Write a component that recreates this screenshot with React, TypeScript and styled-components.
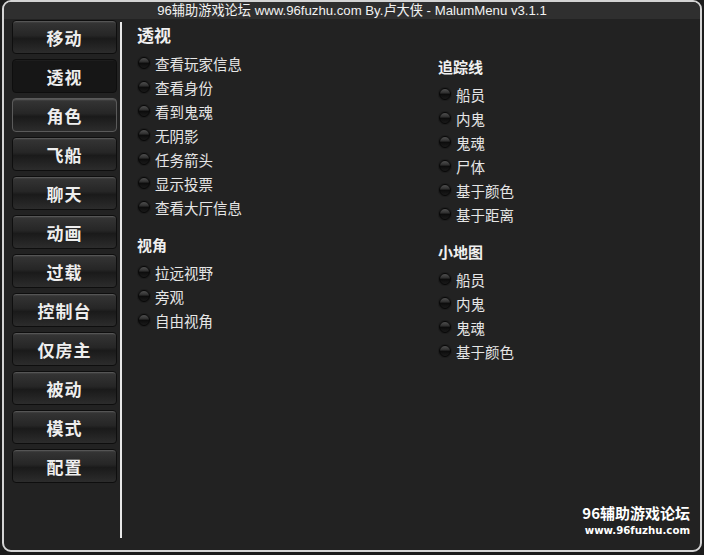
import React from 'react'
import styled, { createGlobalStyle } from 'styled-components'

const GlobalStyle = createGlobalStyle`
  html, body {
    margin: 0;
    padding: 0;
    background: #1b1b1b;
  }
  body {
    font-family: 'Liberation Sans', 'Noto Sans CJK SC', sans-serif;
  }
`

const Window = styled.div`
  box-sizing: border-box;
  width: 700px;
  height: 552px;
  margin: 0 2px 0 2px;
  border: 2px solid #d4d4d4;
  border-radius: 9px;
  background: #222222;
  overflow: hidden;
  display: flex;
  flex-direction: column;
`

const TitleBar = styled.div`
  height: 17px;
  line-height: 17px;
  background: #2f2f2f;
  color: #f2f2f2;
  font-size: 13.2px;
  text-align: center;
`

const Body = styled.div`
  flex: 1;
  display: flex;
  padding: 1px 0 0 8px;
  position: relative;
`

const Sidebar = styled.div`
  width: 105px;
  display: flex;
  flex-direction: column;
  gap: 5px;
`

const NavButton = styled.div<{ $active?: boolean; $hover?: boolean }>`
  box-sizing: border-box;
  height: 34px;
  border-radius: 4px;
  border: 1px solid ${(p) => (p.$hover ? '#5a5a5a' : '#0e0e0e')};
  background: ${(p) =>
    p.$active
      ? '#161616'
      : 'linear-gradient(to bottom, #4a4a4a 0%, #333 8%, #262626 45%, #1a1a1a 55%, #2c2c2c 100%)'};
  box-shadow: ${(p) => (p.$active ? 'inset 0 1px 0 #1d1d1d' : 'inset 0 1px 0 #555')};
  color: #eeeeee;
  font-family: 'Noto Sans CJK SC', sans-serif;
  font-weight: 700;
  font-size: 17px;
  display: flex;
  align-items: center;
  justify-content: center;
  letter-spacing: 1px;
`

const Divider = styled.div`
  width: 2px;
  background: #e8e8e8;
  margin: 2px 0 12px 3px;
`

const Content = styled.div`
  flex: 1;
  display: grid;
  grid-template-columns: 301px 1fr;
  padding: 4px 0 0 15px;
`

const Column = styled.div<{ $top: number }>`
  display: flex;
  flex-direction: column;
  padding-top: ${(p) => p.$top}px;
`

const Heading = styled.div<{ $size?: number; $gap?: number; $below?: number }>`
  color: #f0f0f0;
  font-family: 'Noto Sans CJK SC', sans-serif;
  font-weight: 700;
  font-size: ${(p) => p.$size ?? 15}px;
  line-height: 22px;
  height: 22px;
  margin-top: ${(p) => p.$gap ?? 0}px;
  margin-bottom: ${(p) => p.$below ?? 4}px;
`

const Option = styled.div`
  display: flex;
  align-items: center;
  gap: 5px;
  height: 24px;
  color: #e6e6e6;
  font-family: 'Noto Sans CJK SC', sans-serif;
  font-size: 14.5px;
  padding-left: 1px;
`

const Check = styled.span`
  box-sizing: border-box;
  width: 12px;
  height: 12px;
  border-radius: 6px;
  border: 1px solid #080808;
  background: linear-gradient(to bottom, #505050 0%, #2e2e2e 40%, #0c0c0c 52%, #1a1a1a 100%);
  box-shadow: 0 0 0 1px #1c1c1c;
  flex-shrink: 0;
`

const Watermark = styled.div`
  position: absolute;
  right: 10px;
  bottom: 11px;
  text-align: right;
  color: #ffffff;
  font-family: 'DejaVu Sans', 'Noto Sans CJK SC', sans-serif;
  font-weight: 700;
`

const WatermarkTitle = styled.div`
  font-family: 'Noto Sans CJK SC', sans-serif;
  font-size: 15px;
  line-height: 20px;
  letter-spacing: 0;
`

const WatermarkUrl = styled.div`
  font-size: 10.2px;
  line-height: 16px;
`

const tabs = ['移动', '透视', '角色', '飞船', '聊天', '动画', '过载', '控制台', '仅房主', '被动', '模式', '配置']

function OptionList({ items }: { items: string[] }) {
  return (
    <>
      {items.map((t) => (
        <Option key={t}>
          <Check />
          {t}
        </Option>
      ))}
    </>
  )
}

export default function App() {
  return (
    <>
      <GlobalStyle />
      <Window>
        <TitleBar>96辅助游戏论坛 www.96fuzhu.com By.卢大侠 - MalumMenu v3.1.1</TitleBar>
        <Body>
          <Sidebar>
            {tabs.map((t) => (
              <NavButton key={t} $active={t === '透视'} $hover={t === '角色'}>
                {t}
              </NavButton>
            ))}
          </Sidebar>
          <Divider />
          <Content>
            <Column $top={0}>
              <Heading $size={17} $below={5}>透视</Heading>
              <OptionList items={['查看玩家信息', '查看身份', '看到鬼魂', '无阴影', '任务箭头', '显示投票', '查看大厅信息']} />
              <Heading $gap={15}>视角</Heading>
              <OptionList items={['拉远视野', '旁观', '自由视角']} />
            </Column>
            <Column $top={32}>
              <Heading>追踪线</Heading>
              <OptionList items={['船员', '内鬼', '鬼魂', '尸体', '基于颜色', '基于距离']} />
              <Heading $gap={15}>小地图</Heading>
              <OptionList items={['船员', '内鬼', '鬼魂', '基于颜色']} />
            </Column>
          </Content>
          <Watermark>
            <WatermarkTitle>96辅助游戏论坛</WatermarkTitle>
            <WatermarkUrl>www.96fuzhu.com</WatermarkUrl>
          </Watermark>
        </Body>
      </Window>
    </>
  )
}
